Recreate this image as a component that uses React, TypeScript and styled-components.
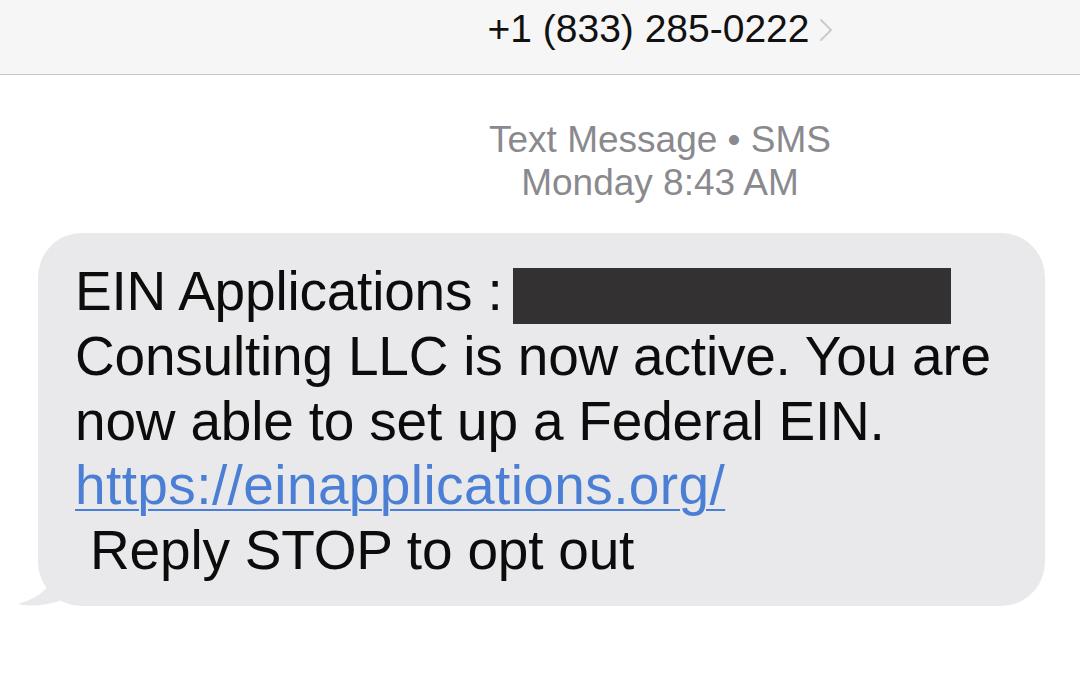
import React from "react";
import styled, { createGlobalStyle } from "styled-components";

const Global = createGlobalStyle`
  html, body { margin: 0; padding: 0; background: #ffffff; }
  body { font-family: "Liberation Sans", Arial, sans-serif; -webkit-font-smoothing: antialiased; }
`;

const Page = styled.div`
  width: 1080px;
  height: 675px;
  overflow: hidden;
  background: #ffffff;
  display: flex;
  flex-direction: column;
`;

const Header = styled.header`
  height: 74px;
  background: #f6f6f6;
  border-bottom: 1px solid #c6c6c8;
  display: flex;
  align-items: flex-start;
  justify-content: center;
  padding-left: 240px;
  box-sizing: content-box;
`;

const Contact = styled.div`
  display: flex;
  align-items: center;
  gap: 9px;
  margin-top: 7px;
  font-size: 39px;
  line-height: 44px;
  color: #111111;
`;

const Chevron = styled.svg`
  width: 14px;
  height: 24px;
  margin-top: 2px;
`;

const Meta = styled.div`
  margin-top: 43px;
  padding-left: 240px;
  display: flex;
  flex-direction: column;
  align-items: center;
  font-size: 37px;
  line-height: 43px;
  color: #8a8a8e;
`;

const Thread = styled.div`
  padding: 29px 35px 0 38px;
`;

const Bubble = styled.div`
  position: relative;
  background: #e9e9eb;
  border-radius: 44px;
  padding: 26px 30px 24px 37px;
  font-size: 55px;
  line-height: 64.5px;
  letter-spacing: -0.2px;
  color: #0c0c0c;
  white-space: pre-wrap;
`;

const Tail = styled.svg`
  position: absolute;
  left: -22px;
  bottom: 0;
  width: 60px;
  height: 50px;
`;

const Redacted = styled.span`
  display: inline-block;
  width: 438px;
  height: 56px;
  margin-left: -5px;
  background: #333132;
  vertical-align: -14px;
`;

const Link = styled.a`
  color: #4a7fd5;
  letter-spacing: 0.4px;
  text-decoration: underline;
  text-decoration-thickness: 2px;
  text-underline-offset: 5px;
`;

export default function App() {
  return (
    <>
      <Global />
      <Page>
        <Header>
          <Contact>
            <span>+1 (833) 285-0222</span>
            <Chevron viewBox="0 0 14 24">
              <polyline points="2,2 12,12 2,22" fill="none" stroke="#cbcbce" strokeWidth="2" strokeLinecap="round" strokeLinejoin="round" />
            </Chevron>
          </Contact>
        </Header>
        <Meta>
          <span>Text Message • SMS</span>
          <span>Monday 8:43 AM</span>
        </Meta>
        <Thread>
          <Bubble>
            <Tail viewBox="0 0 60 50">
              <path d="M40 0 C40 20 36 38 2 48 C20 52 42 48 58 38 L60 0 Z" fill="#e9e9eb" />
            </Tail>
            {"EIN Applications : "}<Redacted />{"\nConsulting LLC is now active. You are now able to set up a Federal EIN.\n"}
            <Link href="#">https://einapplications.org/</Link>
            {"\n Reply STOP to opt out"}
          </Bubble>
        </Thread>
      </Page>
    </>
  );
}
